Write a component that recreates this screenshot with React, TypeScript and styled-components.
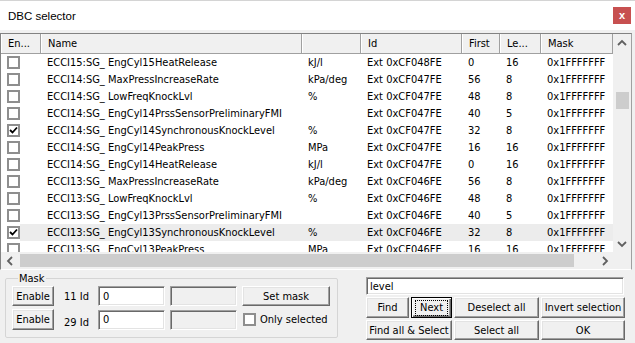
import React from 'react';
import styled, { createGlobalStyle, css } from 'styled-components';

const uiFont = `"DejaVu Sans Condensed", "DejaVu Sans", "Liberation Sans", sans-serif`;

const GlobalStyle = createGlobalStyle`
  html, body {
    margin: 0;
    padding: 0;
  }
  body {
    background: #f0f0f0;
    font-family: ${uiFont};
    font-stretch: condensed;
    font-size: 11px;
    color: #000;
    width: 635px;
    height: 343px;
    overflow: hidden;
  }
  * { box-sizing: border-box; }
`;

type Signal = {
  name: string;
  unit: string;
  id: string;
  first: string;
  len: string;
  checked?: boolean;
  selected?: boolean;
};

const columns = [40, 261, 59, 101, 38, 41, 72];
const headers = ['En...', 'Name', '', 'Id', 'First', 'Le...', 'Mask'];

const signals: Signal[] = [
  { name: 'ECCI15:SG_ EngCyl15HeatRelease', unit: 'kJ/l', id: 'Ext 0xCF048FE', first: '0', len: '16' },
  { name: 'ECCI14:SG_ MaxPressIncreaseRate', unit: 'kPa/deg', id: 'Ext 0xCF047FE', first: '56', len: '8' },
  { name: 'ECCI14:SG_ LowFreqKnockLvl', unit: '%', id: 'Ext 0xCF047FE', first: '48', len: '8' },
  { name: 'ECCI14:SG_ EngCyl14PrssSensorPreliminaryFMI', unit: '', id: 'Ext 0xCF047FE', first: '40', len: '5' },
  { name: 'ECCI14:SG_ EngCyl14SynchronousKnockLevel', unit: '%', id: 'Ext 0xCF047FE', first: '32', len: '8', checked: true },
  { name: 'ECCI14:SG_ EngCyl14PeakPress', unit: 'MPa', id: 'Ext 0xCF047FE', first: '16', len: '16' },
  { name: 'ECCI14:SG_ EngCyl14HeatRelease', unit: 'kJ/l', id: 'Ext 0xCF047FE', first: '0', len: '16' },
  { name: 'ECCI13:SG_ MaxPressIncreaseRate', unit: 'kPa/deg', id: 'Ext 0xCF046FE', first: '56', len: '8' },
  { name: 'ECCI13:SG_ LowFreqKnockLvl', unit: '%', id: 'Ext 0xCF046FE', first: '48', len: '8' },
  { name: 'ECCI13:SG_ EngCyl13PrssSensorPreliminaryFMI', unit: '', id: 'Ext 0xCF046FE', first: '40', len: '5' },
  { name: 'ECCI13:SG_ EngCyl13SynchronousKnockLevel', unit: '%', id: 'Ext 0xCF046FE', first: '32', len: '8', checked: true, selected: true },
  { name: 'ECCI13:SG_ EngCyl13PeakPress', unit: 'MPa', id: 'Ext 0xCF046FE', first: '16', len: '16' },
];

const Chevron = ({ dir }: { dir: 'up' | 'down' | 'left' | 'right' }) => {
  const pts = {
    up: '1,6 5,2 9,6',
    down: '1,2 5,6 9,2',
    left: '6,1 2,5 6,9',
    right: '2,1 6,5 2,9',
  }[dir];
  const vertical = dir === 'up' || dir === 'down';
  return (
    <svg width={vertical ? 10 : 8} height={vertical ? 8 : 10} viewBox={vertical ? '0 0 10 8' : '0 0 8 10'}>
      <polyline points={pts} fill="none" stroke="#606060" strokeWidth="1.8" />
    </svg>
  );
};

const CheckMark = () => (
  <svg width="9" height="9" viewBox="0 0 9 9">
    <polyline points="1,4 3.5,6.5 8,1.5" fill="none" stroke="#000" strokeWidth="1.8" />
  </svg>
);

const App = () => {
  return (
    <>
      <GlobalStyle />
      <Window>
        <TitleBar>
          <Title>DBC selector</Title>
          <CloseButton>x</CloseButton>
        </TitleBar>

        <ListView>
          <ListContent>
            <HeaderRow>
              {headers.map((h, i) => (
                <HeaderCell key={i} $w={columns[i]}>{h}</HeaderCell>
              ))}
            </HeaderRow>
            <Rows>
              {signals.map((s, i) => (
                <Row key={i} $selected={s.selected}>
                  <CheckCell $w={columns[0]}>
                    <Check>{s.checked ? <CheckMark /> : null}</Check>
                  </CheckCell>
                  <Cell $w={columns[1]}>{s.name}</Cell>
                  <Cell $w={columns[2]}>{s.unit}</Cell>
                  <Cell $w={columns[3]}>{s.id}</Cell>
                  <Cell $w={columns[4]}>{s.first}</Cell>
                  <Cell $w={columns[5]}>{s.len}</Cell>
                  <Cell $w={columns[6]}>0x1FFFFFFF</Cell>
                </Row>
              ))}
            </Rows>
          </ListContent>

          <VScroll>
            <ArrowBox><Chevron dir="up" /></ArrowBox>
            <VTrack>
              <VThumb />
            </VTrack>
            <ArrowBox><Chevron dir="down" /></ArrowBox>
          </VScroll>

          <HScroll>
            <ArrowBox><Chevron dir="left" /></ArrowBox>
            <HTrack>
              <HThumb />
            </HTrack>
            <ArrowBox><Chevron dir="right" /></ArrowBox>
          </HScroll>
          <Corner />
        </ListView>

        <Bottom>
          <MaskGroup>
            <Legend>Mask</Legend>
            <MaskRow>
              <Button $w={42} $h={20}>Enable</Button>
              <IdLabel>11 Id</IdLabel>
              <TextBox $w={67} defaultValue="0" />
              <TextBox $w={67} disabled />
              <Button $w={88} $h={20}>Set mask</Button>
            </MaskRow>
            <MaskRow>
              <Button $w={42} $h={21}>Enable</Button>
              <IdLabel $low>29 Id</IdLabel>
              <TextBox $w={67} defaultValue="0" />
              <TextBox $w={67} disabled />
              <CheckLabel>
                <Check />
                Only selected
              </CheckLabel>
            </MaskRow>
          </MaskGroup>

          <SearchPanel>
            <SearchBox defaultValue="level" />
            <ButtonGrid>
              <Button $h={21}>Find</Button>
              <Button $h={21} $default><Focus>Next</Focus></Button>
              <Button $h={21}>Deselect all</Button>
              <Button $h={21}>Invert selection</Button>
              <Button $h={20} $span={2}>Find all &amp; Select</Button>
              <Button $h={20}>Select all</Button>
              <Button $h={20}>OK</Button>
            </ButtonGrid>
          </SearchPanel>
        </Bottom>
      </Window>
    </>
  );
};

export default App;

const Window = styled.div`
  width: 635px;
  height: 343px;
  display: flex;
  flex-direction: column;
  background: #f0f0f0;
  border-top: 1px solid #d4d4d4;
`;

const TitleBar = styled.div`
  height: 29px;
  background: #fff;
  display: flex;
  align-items: center;
  justify-content: space-between;
  padding: 0 4px 0 8px;
`;

const Title = styled.span`
  font-family: "Liberation Sans", Arial, sans-serif;
  font-stretch: normal;
  font-size: 11.5px;
  color: #000;
`;

const CloseButton = styled.div`
  width: 18px;
  height: 17px;
  background: #c75050;
  color: #fff;
  font-family: "Liberation Sans", Arial, sans-serif;
  font-weight: bold;
  font-size: 11px;
  display: flex;
  align-items: center;
  justify-content: center;
  padding-bottom: 2px;
`;

const ListView = styled.div`
  margin-top: 3px;
  width: 632px;
  height: 237px;
  display: grid;
  grid-template-columns: 612px 18px;
  grid-template-rows: 1fr 17px;
  border: 1px solid;
  border-color: #828282 #a0a0a0 #fff #828282;
  background: #fff;
`;

const ListContent = styled.div`
  overflow: hidden;
  display: flex;
  flex-direction: column;
`;

const HeaderRow = styled.div`
  display: flex;
  height: 20px;
  flex: none;
  background: #f0f0f0;
  border-bottom: 1px solid #a0a0a0;
`;

const HeaderCell = styled.div<{ $w: number }>`
  width: ${({ $w }) => $w}px;
  flex: none;
  padding-left: 6px;
  line-height: 19px;
  border-left: 1px solid #fff;
  border-right: 1px solid #a0a0a0;
  white-space: nowrap;
  overflow: hidden;
`;

const Rows = styled.div`
  flex: 1;
  overflow: hidden;
`;

const Row = styled.div<{ $selected?: boolean }>`
  display: flex;
  height: 17px;
  align-items: center;
  ${({ $selected }) =>
    $selected &&
    css`
      background: linear-gradient(to right, transparent 19px, #ececec 19px);
    `}
`;

const Cell = styled.div<{ $w: number }>`
  width: ${({ $w }) => $w}px;
  flex: none;
  padding-left: 6px;
  white-space: nowrap;
  overflow: hidden;
  line-height: 17px;
`;

const CheckCell = styled.div<{ $w: number }>`
  width: ${({ $w }) => $w}px;
  flex: none;
  display: flex;
  align-items: center;
  padding-left: 6px;
`;

const Check = styled.span`
  width: 13px;
  height: 13px;
  flex: none;
  display: inline-flex;
  align-items: center;
  justify-content: center;
  background: #fff;
  border: 2px solid #8e8e8e;
`;

const VScroll = styled.div`
  grid-row: 1;
  grid-column: 2;
  display: flex;
  flex-direction: column;
  background: #f0f0f0;
`;

const ArrowBox = styled.div`
  width: 17px;
  height: 17px;
  flex: none;
  display: flex;
  align-items: center;
  justify-content: center;
`;

const VTrack = styled.div`
  flex: 1;
  padding: 41px 2px 0 3px;
`;

const VThumb = styled.div`
  height: 17px;
  background: #cdcdcd;
`;

const HScroll = styled.div`
  grid-row: 2;
  grid-column: 1;
  display: flex;
  background: #f0f0f0;
`;

const HTrack = styled.div`
  flex: 1;
  padding: 2px 22px 2px 2px;
`;

const HThumb = styled.div`
  height: 100%;
  background: #cdcdcd;
`;

const Corner = styled.div`
  grid-row: 2;
  grid-column: 2;
  background: #f0f0f0;
`;

const Bottom = styled.div`
  display: flex;
  padding-left: 5px;
`;

const MaskGroup = styled.fieldset`
  margin: 2px 0 0;
  padding: 1px 0 0 6px;
  width: 333px;
  height: 66px;
  border: 1px solid #d5d5d5;
  border-radius: 2px;
  display: flex;
  flex-direction: column;
  gap: 3px;
`;

const Legend = styled.legend`
  margin-left: 6px;
  padding: 0 1px;
  line-height: 13px;
`;

const MaskRow = styled.div`
  display: flex;
  align-items: center;
`;

const IdLabel = styled.span<{ $low?: boolean }>`
  width: 44px;
  padding-left: 10px;
  padding-top: ${({ $low }) => ($low ? 5 : 0)}px;
  white-space: nowrap;
`;

const sunken = css`
  border: 1px solid;
  border-color: #a0a0a0 #fff #fff #a0a0a0;
  box-shadow: inset 1px 1px 0 #696969, inset -1px -1px 0 #e3e3e3;
  font-family: ${uiFont};
  font-stretch: condensed;
  font-size: 11px;
  color: #000;
  outline: none;
`;

const TextBox = styled.input<{ $w: number }>`
  ${sunken};
  width: ${({ $w }) => $w}px;
  height: 20px;
  margin-right: 5px;
  padding: 0 0 0 4px;
  background: #fff;

  &:disabled {
    background: #f0f0f0;
  }
`;

const Button = styled.button<{ $w?: number; $h: number; $default?: boolean; $span?: number }>`
  width: ${({ $w }) => ($w ? `${$w}px` : 'auto')};
  height: ${({ $h }) => $h}px;
  grid-column: ${({ $span }) => ($span ? `span ${$span}` : 'auto')};
  padding: 0;
  background: #f0f0f0;
  border: 1px solid;
  border-color: #fff #696969 #696969 #fff;
  box-shadow: inset -1px -1px 0 #a0a0a0, inset 1px 1px 0 #e3e3e3;
  font-family: ${uiFont};
  font-stretch: condensed;
  font-size: 11px;
  white-space: nowrap;
  color: #000;
  display: flex;
  align-items: center;
  justify-content: center;
  ${({ $default }) =>
    $default &&
    css`
      border-color: #000;
      box-shadow: inset 1px 1px 0 #fff, inset -1px -1px 0 #696969, inset -2px -2px 0 #a0a0a0;
    `}
`;

const Focus = styled.span`
  border: 1px dotted #000;
  padding: 0 4px;
  line-height: 14px;
`;

const CheckLabel = styled.label`
  display: flex;
  align-items: center;
  gap: 4px;
  margin-left: 1px;
  white-space: nowrap;
`;

const SearchPanel = styled.div`
  margin: 7px 0 0 28px;
  width: 259px;
  display: flex;
  flex-direction: column;
  gap: 2px;
`;

const SearchBox = styled.input`
  ${sunken};
  width: 258px;
  height: 18px;
  padding: 0 0 0 3px;
  background: #fff;
`;

const ButtonGrid = styled.div`
  display: grid;
  grid-template-columns: 43px 41px 85px 84px;
  column-gap: 2px;
  row-gap: 2px;
`;
